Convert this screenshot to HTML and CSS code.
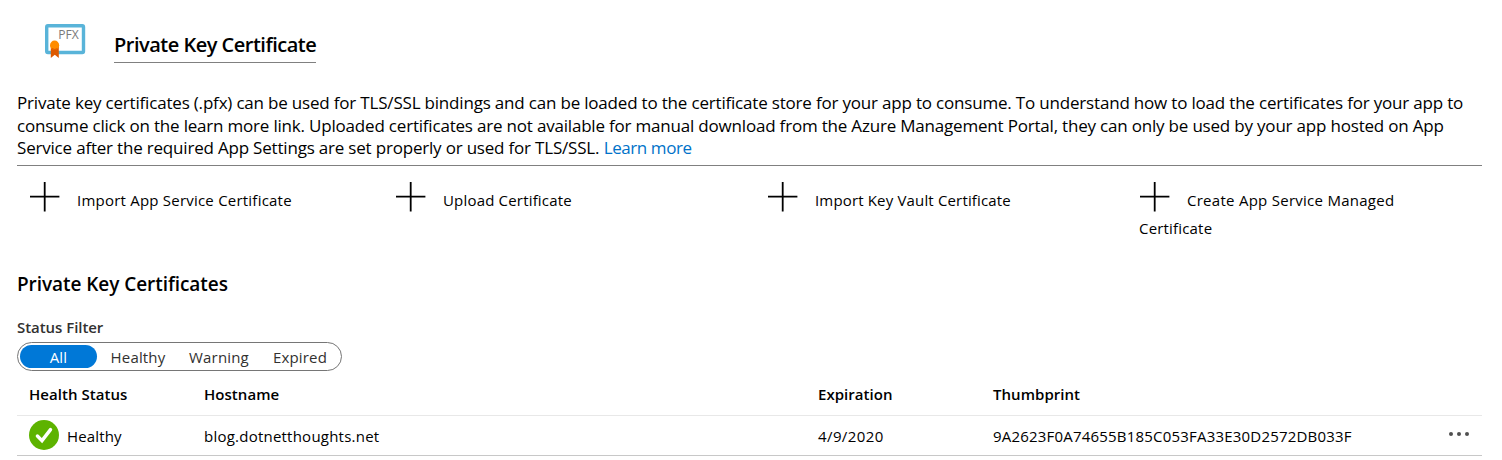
FILE: index.html
```
<!DOCTYPE html>
<html lang="en">
<head>
<meta charset="utf-8">
<title>Private Key Certificate</title>
<link rel="stylesheet" href="styles.css">
</head>
<body>
<main class="page">
  <header class="intro">
    <svg class="pfx-icon" width="42" height="36" viewBox="0 0 42 36">
      <rect x="1.7" y="1.7" width="36.8" height="26.8" rx="1.2" fill="#fff" stroke="#59b4d9" stroke-width="3.4"/>
      <text class="pfx-text" x="13.2" y="15.3" textLength="20.5" lengthAdjust="spacingAndGlyphs">PFX</text>
      <path d="M5.8 22h8v12l-4-3.2-4 3.2z" fill="#dd5900"/>
      <circle cx="9.6" cy="21.2" r="4.6" fill="#ff8c00"/>
      <path d="M7 24.6q2.8 1.8 5.4 0" fill="none" stroke="#dd5900" stroke-width="1"/>
    </svg>
    <h1 class="title">Private Key Certificate</h1>
  </header>

  <p class="description"><span class="line-a">Private key certificates (.pfx) can be used for TLS/SSL bindings and can be loaded to the certificate store for your app to consume. To understand how to load the certificates for your app to</span><br><span class="line-b">consume click on the learn more link. Uploaded certificates are not available for manual download from the Azure Management Portal, they can only be used by your app hosted on App</span><br><span class="line-b">Service after the required App Settings are set properly or used for TLS/SSL.</span> <a class="link">Learn more</a></p>

  <nav class="actions">
    <a class="action"><svg class="plus" width="30" height="30" viewBox="0 0 30 30"><path d="M14.7 0v29.4M0 14.7h29.4"/></svg><span class="ls-app">Import App Service Certificate</span></a>
    <a class="action"><svg class="plus" width="30" height="30" viewBox="0 0 30 30"><path d="M14.7 0v29.4M0 14.7h29.4"/></svg><span class="ls-upload">Upload Certificate</span></a>
    <a class="action"><svg class="plus" width="30" height="30" viewBox="0 0 30 30"><path d="M14.7 0v29.4M0 14.7h29.4"/></svg><span class="ls-vault">Import Key Vault Certificate</span></a>
    <a class="action"><svg class="plus" width="30" height="30" viewBox="0 0 30 30"><path d="M14.7 0v29.4M0 14.7h29.4"/></svg><span class="ls-managed">Create App Service Managed</span> <span class="ls-upload wrapped">Certificate</span></a>
  </nav>

  <h2 class="section-title">Private Key Certificates</h2>

  <div class="filter-label">Status Filter</div>
  <div class="filter">
    <span class="option selected">All</span>
    <span class="option">Healthy</span>
    <span class="option">Warning</span>
    <span class="option">Expired</span>
  </div>

  <section class="table">
    <div class="row head">
      <span>Health Status</span><span>Hostname</span><span>Expiration</span><span>Thumbprint</span><span></span>
    </div>
    <div class="row data">
      <span class="status"><svg width="30" height="30" viewBox="0 0 30 30"><circle cx="15" cy="15" r="15" fill="#5db300"/><path d="M8.4 16l4.6 4.6 8.5-11" fill="none" stroke="#fff" stroke-width="3.4" stroke-linecap="round" stroke-linejoin="miter"/></svg><span>Healthy</span></span>
      <span class="host">blog.dotnetthoughts.net</span>
      <span class="date">4/9/2020</span>
      <span class="thumb">9A2623F0A74655B185C053FA33E30D2572DB033F</span>
      <svg class="more" width="20" height="4" viewBox="0 0 20 4"><circle cx="2" cy="2" r="2"/><circle cx="10" cy="2" r="2"/><circle cx="18" cy="2" r="2"/></svg>
    </div>
  </section>
</main>
</body>
</html>
```
FILE: styles.css
```
* { box-sizing: border-box; }
body {
  margin: 0;
  background: #fff;
  color: #000;
  font: 15px/20px "Open Sans", "Noto Sans", sans-serif;
}
.page { padding: 24px 20px 0 17px; }

.intro {
  display: flex;
  align-items: flex-start;
  height: 68px;
  padding-left: 28px;
}
.pfx-icon { flex: none; }
.pfx-text { font: 12px "Open Sans", sans-serif; fill: #7a7a7a; }
.title {
  margin: 7px 0 0 27px;
  width: 202px;
  padding-bottom: 3px;
  border-bottom: 1px solid #808080;
  font-size: 20px;
  line-height: 28px;
  font-weight: 600;
  letter-spacing: -0.5px;
  white-space: nowrap;
}

.description {
  margin: 0;
  height: 74px;
  border-bottom: 1px solid #808080;
  font-size: 17px;
  line-height: 22.5px;
  white-space: nowrap;
}
.line-a { letter-spacing: -0.19px; }
.line-b { letter-spacing: -0.196px; }
.link { color: #0072c9; letter-spacing: -0.42px; }

.actions {
  display: grid;
  grid-template-columns: 366px 372px 372px 300px;
  height: 90px;
  padding: 16px 0 0 13px;
  line-height: 28px;
}
.plus {
  margin-right: 17px;
  vertical-align: -6px;
  fill: none;
  stroke: #000;
  stroke-width: 1.8;
}
.ls-app { letter-spacing: 0.22px; }
.ls-upload { letter-spacing: 0.18px; }
.ls-vault { letter-spacing: 0.16px; }
.ls-managed { letter-spacing: 0.27px; }
.wrapped { display: block; margin-left: -1px; }

.section-title {
  margin: 14px 0 0;
  font-size: 19px;
  line-height: 28px;
  font-weight: 600;
  letter-spacing: -0.06px;
}
.filter-label {
  margin-top: 19px;
  color: #323130;
  font-weight: 600;
  letter-spacing: -0.05px;
}
.filter {
  display: grid;
  grid-template-columns: 77px 82px 80px 82px;
  margin-top: 5px;
  width: 325px;
  height: 29px;
  padding: 2px;
  border: 1px solid #767676;
  border-radius: 15px;
  color: #323130;
  letter-spacing: 0.17px;
}
.option { height: 23px; line-height: 25px; text-align: center; }
.selected { border-radius: 12px; background: #0078d7; color: #fff; }

.row {
  display: grid;
  grid-template-columns: 175px 614px 175px 456px 20px;
  padding-left: 12px;
}
.head {
  height: 45px;
  padding-top: 13px;
  border-bottom: 1px solid #e8e8e8;
  font-weight: 600;
  letter-spacing: 0.04px;
}
.data {
  height: 40px;
  padding-top: 4px;
  border-bottom: 1px solid #c8c8c8;
  line-height: 32px;
}
.status { display: flex; gap: 8px; letter-spacing: 0.14px; }
.host { letter-spacing: 0.23px; }
.date { letter-spacing: 0.4px; }
.thumb { letter-spacing: 0.2px; }
.more { margin-top: 12px; fill: #505050; }
```
